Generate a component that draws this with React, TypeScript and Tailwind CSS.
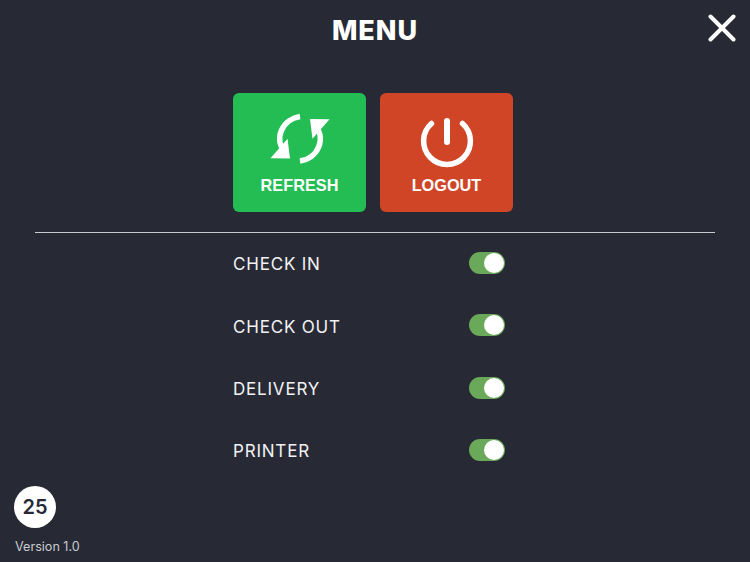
function RefreshIcon() {
  const half = (
    <>
      <path d="M0 -22.3A24 22.5 0 0 0 -15 14" fill="none" stroke="white" strokeWidth="5.6" />
      <path d="M-29.5 19.5L-10 19.7L-12.5 0Z" fill="white" />
    </>
  );
  return (
    <svg width="62" height="56" viewBox="-31 -25.8 62 56">
      {half}
      <g transform="rotate(180)">{half}</g>
    </svg>
  );
}

function PowerIcon() {
  return (
    <svg width="56" height="56" viewBox="-28 -28 56 56" fill="none" stroke="white" strokeLinecap="round">
      <path d="M-15.5 -17.5A23.4 23.4 0 1 0 15.5 -17.5" strokeWidth="5.5" />
      <path d="M0 -20V1" strokeWidth="6" />
    </svg>
  );
}

function ActionButton({ label, color, icon }: { label: string; color: string; icon: React.ReactNode }) {
  return (
    <div className={`flex h-[119px] w-[133px] flex-col items-center rounded-[6px] pt-5 ${color}`}>
      {icon}
      <span className="mt-[6px] font-['Liberation_Sans',sans-serif] text-[16.3px] leading-[20px] font-bold text-white">
        {label}
      </span>
    </div>
  );
}

function Toggle() {
  return (
    <div className="flex h-[22px] w-9 items-center justify-end rounded-full bg-[#6aa85a] pr-[1px]">
      <div className="h-5 w-5 rounded-full bg-white" />
    </div>
  );
}

const rows = ['CHECK IN', 'CHECK OUT', 'DELIVERY', 'PRINTER'];

export default function App() {
  return (
    <div className="relative flex h-[562px] w-[750px] flex-col bg-[#272a35] font-['Inter',sans-serif] text-white">
      <div className="flex h-[93px] justify-center pt-[14px]">
        <h1 className="text-[27px] leading-[34px] font-extrabold tracking-[1px]">MENU</h1>
      </div>

      {/* Close */}
      <svg className="absolute top-[14px] right-[14px]" width="28" height="28" viewBox="0 0 28 28" fill="none" stroke="white" strokeWidth="4" strokeLinecap="round">
        <path d="M2.5 2.5L25.5 25.5M25.5 2.5L2.5 25.5" />
      </svg>

      <div className="flex justify-center gap-[14px] pr-1">
        <ActionButton label="REFRESH" color="bg-[#23bd53]" icon={<RefreshIcon />} />
        <ActionButton label="LOGOUT" color="bg-[#cf4526]" icon={<PowerIcon />} />
      </div>

      <div className="mx-[35px] mt-5 h-px bg-[#c9cad0]" />

      <div className="mt-[19px] ml-[233px] flex w-[272px] flex-col gap-[40.33px]">
        {rows.map((row) => (
          <div key={row} className="flex h-[22px] items-center justify-between">
            <span className="pt-1 text-[17px] tracking-[0.8px] text-[#f2f2f4]">{row}</span>
            <Toggle />
          </div>
        ))}
      </div>

      <div className="mt-auto flex flex-col items-start pb-[6px] pl-[14px]">
        <div className="flex h-[42px] w-[42px] items-center justify-center rounded-full bg-white text-[20px] font-semibold text-[#272a35]">
          25
        </div>
        <span className="mt-[10px] ml-[1px] text-[12.6px] leading-[18px] text-[#c9cad0]">Version 1.0</span>
      </div>
    </div>
  );
}
